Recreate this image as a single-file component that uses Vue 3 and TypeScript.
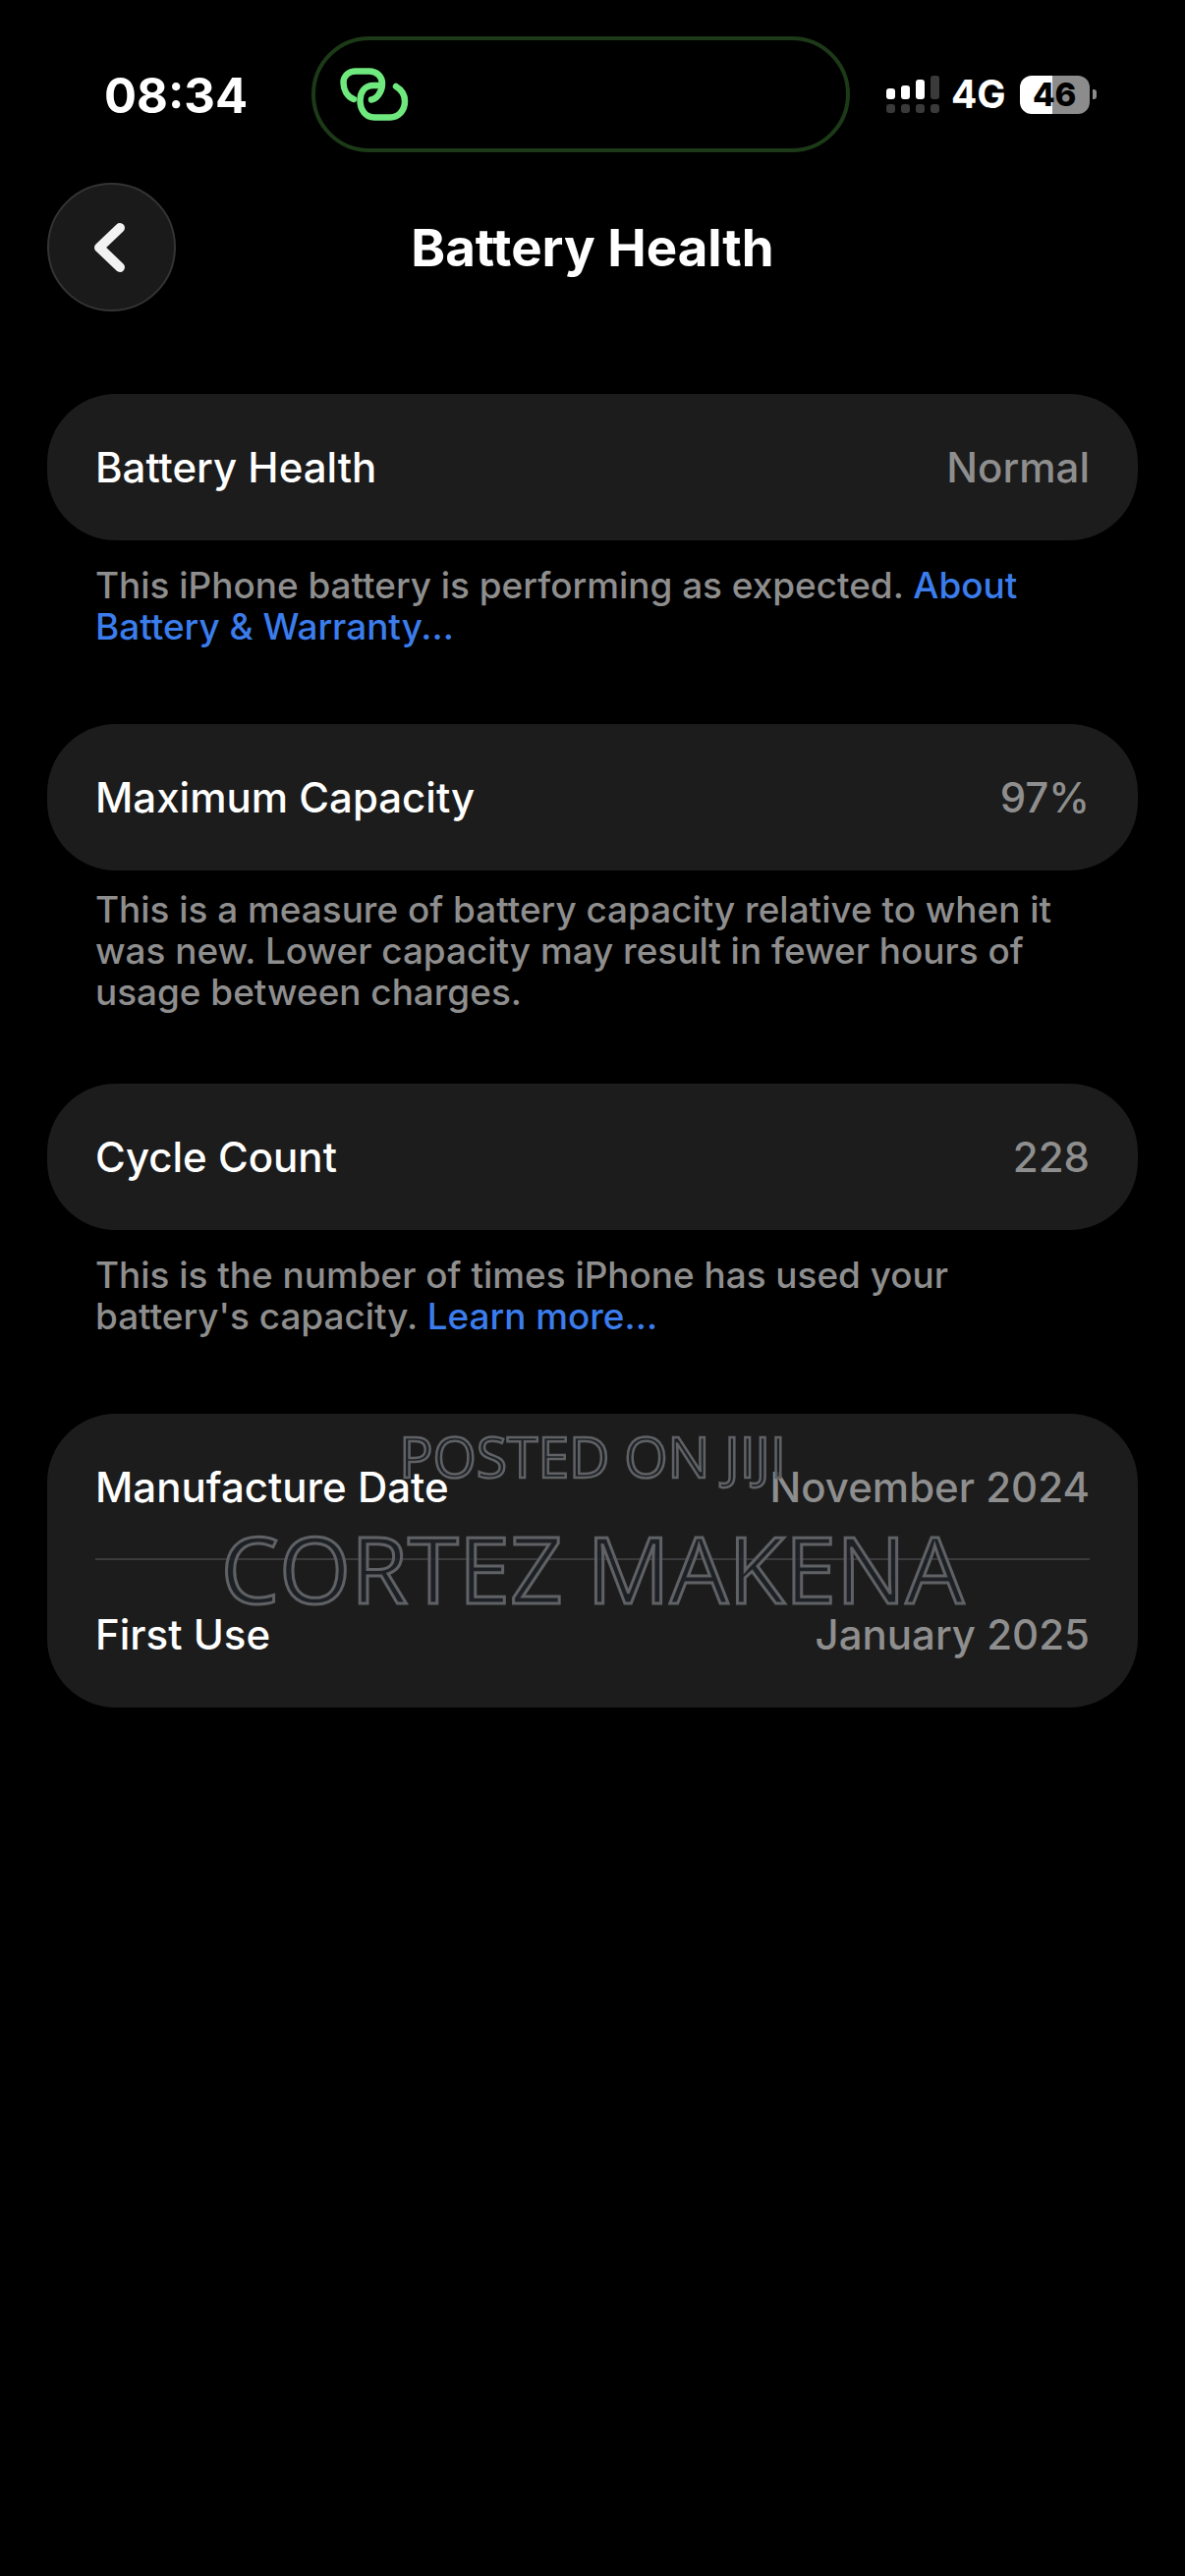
<script setup lang="ts">
interface Row { label: string; value: string }
interface Section { rows: Row[]; note?: string; link?: string; tight?: boolean }

const sections: Section[] = [
  {
    rows: [{ label: 'Battery Health', value: 'Normal' }],
    note: 'This iPhone battery is performing as expected. ',
    link: 'About Battery & Warranty...',
  },
  {
    rows: [{ label: 'Maximum Capacity', value: '97%' }],
    note: 'This is a measure of battery capacity relative to when it was new. Lower capacity may result in fewer hours of usage between charges.',
    tight: true,
  },
  {
    rows: [{ label: 'Cycle Count', value: '228' }],
    note: "This is the number of times iPhone has used your battery's capacity. ",
    link: 'Learn more...',
  },
  {
    rows: [
      { label: 'Manufacture Date', value: 'November 2024' },
      { label: 'First Use', value: 'January 2025' },
    ],
  },
]
</script>

<template>
  <div class="page">
    <header class="status">
      <span class="time">08:34</span>
      <div class="island">
        <svg class="logo" viewBox="0 0 90 70" fill="none" stroke="#6fe97e" stroke-width="6.5" stroke-linecap="round" stroke-linejoin="round">
          <path d="M25 41 C18 38 14.5 31 14.5 24 C14.5 17 20 12.5 27 12.5 H41 C48.5 12.5 54 18 54 25 C54 34 48 41 43 41.5" />
          <path d="M50 27 H45 C36 27 31.5 34 31.5 42 C31.5 52 37 59.5 46 59.5 H62 C71 59.5 77 52 77 43 C77 36 73 31 68 28" />
        </svg>
      </div>
      <div class="indicators">
        <div class="signal">
          <i class="bar b1"></i><i class="bar b2"></i><i class="bar b3"></i><i class="bar b4"></i>
          <i class="dot"></i><i class="dot"></i><i class="dot"></i><i class="dot"></i>
        </div>
        <span class="net">4G</span>
        <div class="battery"><span>46</span></div>
        <i class="nub"></i>
      </div>
    </header>

    <nav class="nav">
      <button class="back" type="button" aria-label="Back">
        <svg viewBox="0 0 32 50" width="32" height="50" fill="none" stroke="#f2f2f2" stroke-width="10" stroke-linecap="round" stroke-linejoin="round">
          <path d="M27 5 L6 25 L27 45" />
        </svg>
      </button>
      <h1 class="title">Battery Health</h1>
    </nav>

    <main class="content">
      <section v-for="(s, i) in sections" :key="i" class="section" :class="{ tight: s.tight }">
        <div class="card">
          <div v-for="r in s.rows" :key="r.label" class="row">
            <span class="label">{{ r.label }}</span>
            <span class="value">{{ r.value }}</span>
          </div>
        </div>
        <p v-if="s.note" class="note">{{ s.note }}<a v-if="s.link" class="link">{{ s.link }}</a></p>
      </section>
    </main>

    <div class="mark mark-top">POSTED ON JIJI</div>
    <div class="mark mark-main">CORTEZ MAKENA</div>
  </div>
</template>

<style>
html, body { margin: 0; background: #000; }
</style>

<style scoped>
.page {
  position: relative;
  width: 1206px;
  height: 2622px;
  background: #000;
  overflow: hidden;
  font-family: Inter, "Liberation Sans", sans-serif;
  color: #fff;
}
.status {
  display: flex;
  align-items: center;
  height: 118px;
  padding: 37px 0 0 106px;
  box-sizing: content-box;
}
.time {
  width: 211px;
  margin-top: 3px;
  font-size: 49px;
  font-weight: 700;
  line-height: 60px;
}
.island {
  width: 548px;
  height: 118px;
  box-sizing: border-box;
  border: 4px solid #1c3a17;
  border-radius: 59px;
  display: flex;
  align-items: center;
  padding-left: 14px;
}
.logo { width: 90px; height: 70px; margin-top: -2px; }
.indicators {
  display: flex;
  align-items: center;
  margin-left: 37px;
}
.signal {
  display: grid;
  grid-template-columns: repeat(4, 9px);
  grid-template-rows: 24px 9px;
  column-gap: 6px;
  row-gap: 5px;
  align-items: end;
}
.bar, .dot { display: block; border-radius: 3px; }
.bar { background: #fff; }
.dot { height: 9px; background: #3a3a3a; }
.b1 { height: 11px; }
.b2 { height: 14px; }
.b3 { height: 20px; }
.b4 { height: 24px; background: #3a3a3a; }
.net {
  margin-left: 12px;
  font-size: 39px;
  font-weight: 700;
  line-height: 40px;
}
.battery {
  margin-left: 14px;
  width: 71px;
  height: 39px;
  border-radius: 12px;
  background: linear-gradient(90deg, #fff 0 46%, #8c8c8c 46% 100%);
  color: #000;
  font-size: 33px;
  font-weight: 800;
  display: flex;
  align-items: center;
  justify-content: center;
}
.nub {
  width: 4px;
  height: 10px;
  margin-left: 3px;
  background: #8c8c8c;
  border-radius: 0 3px 3px 0;
}
.nav {
  position: relative;
  display: flex;
  align-items: center;
  justify-content: center;
  height: 131px;
  margin: 31px 48px 0;
}
.back {
  position: absolute;
  left: 0;
  top: 0;
  width: 131px;
  height: 131px;
  padding: 0 5px 0 0;
  border-radius: 50%;
  border: 2px solid #343434;
  background: #1a1a1a;
  display: flex;
  align-items: center;
  justify-content: center;
}
.title {
  margin: 0;
  font-size: 52.8px;
  font-weight: 700;
  line-height: 62px;
}
.content {
  display: flex;
  flex-direction: column;
  padding: 84px 48px 0;
}
.section { margin-bottom: 78px; }
.section.tight { margin-bottom: 72px; }
.card {
  position: relative;
  background: #1c1c1c;
  border-radius: 70px;
  padding: 0 49px;
}
.row {
  box-sizing: border-box;
  display: flex;
  align-items: center;
  justify-content: space-between;
  height: 149px;
  font-size: 42px;
  font-weight: 500;
}
.row + .row {
  height: 152px;
  margin-top: -2px;
  border-top: 2px solid #3a3a3c;
}
.value { color: #8e8e8e; }
.note {
  margin: 25px 0 0;
  padding: 0 49px;
  font-size: 36.9px;
  font-weight: 500;
  line-height: 42px;
  color: #8e8e8e;
}
.tight .note { margin-top: 19px; }
.link { color: #3b7ded; }
.mark {
  position: absolute;
  left: 0;
  width: 1206px;
  text-align: center;
  font-family: "Open Sans", sans-serif;
  font-weight: 500;
  color: rgba(30, 35, 41, 0.8);
  -webkit-text-stroke: 3px #5f6164;
  white-space: nowrap;
}
.mark-top { top: 1434px; font-size: 57px; line-height: 96px; -webkit-text-stroke-width: 2.5px; }
.mark-main { top: 1531px; font-size: 94px; line-height: 130px; }
</style>
